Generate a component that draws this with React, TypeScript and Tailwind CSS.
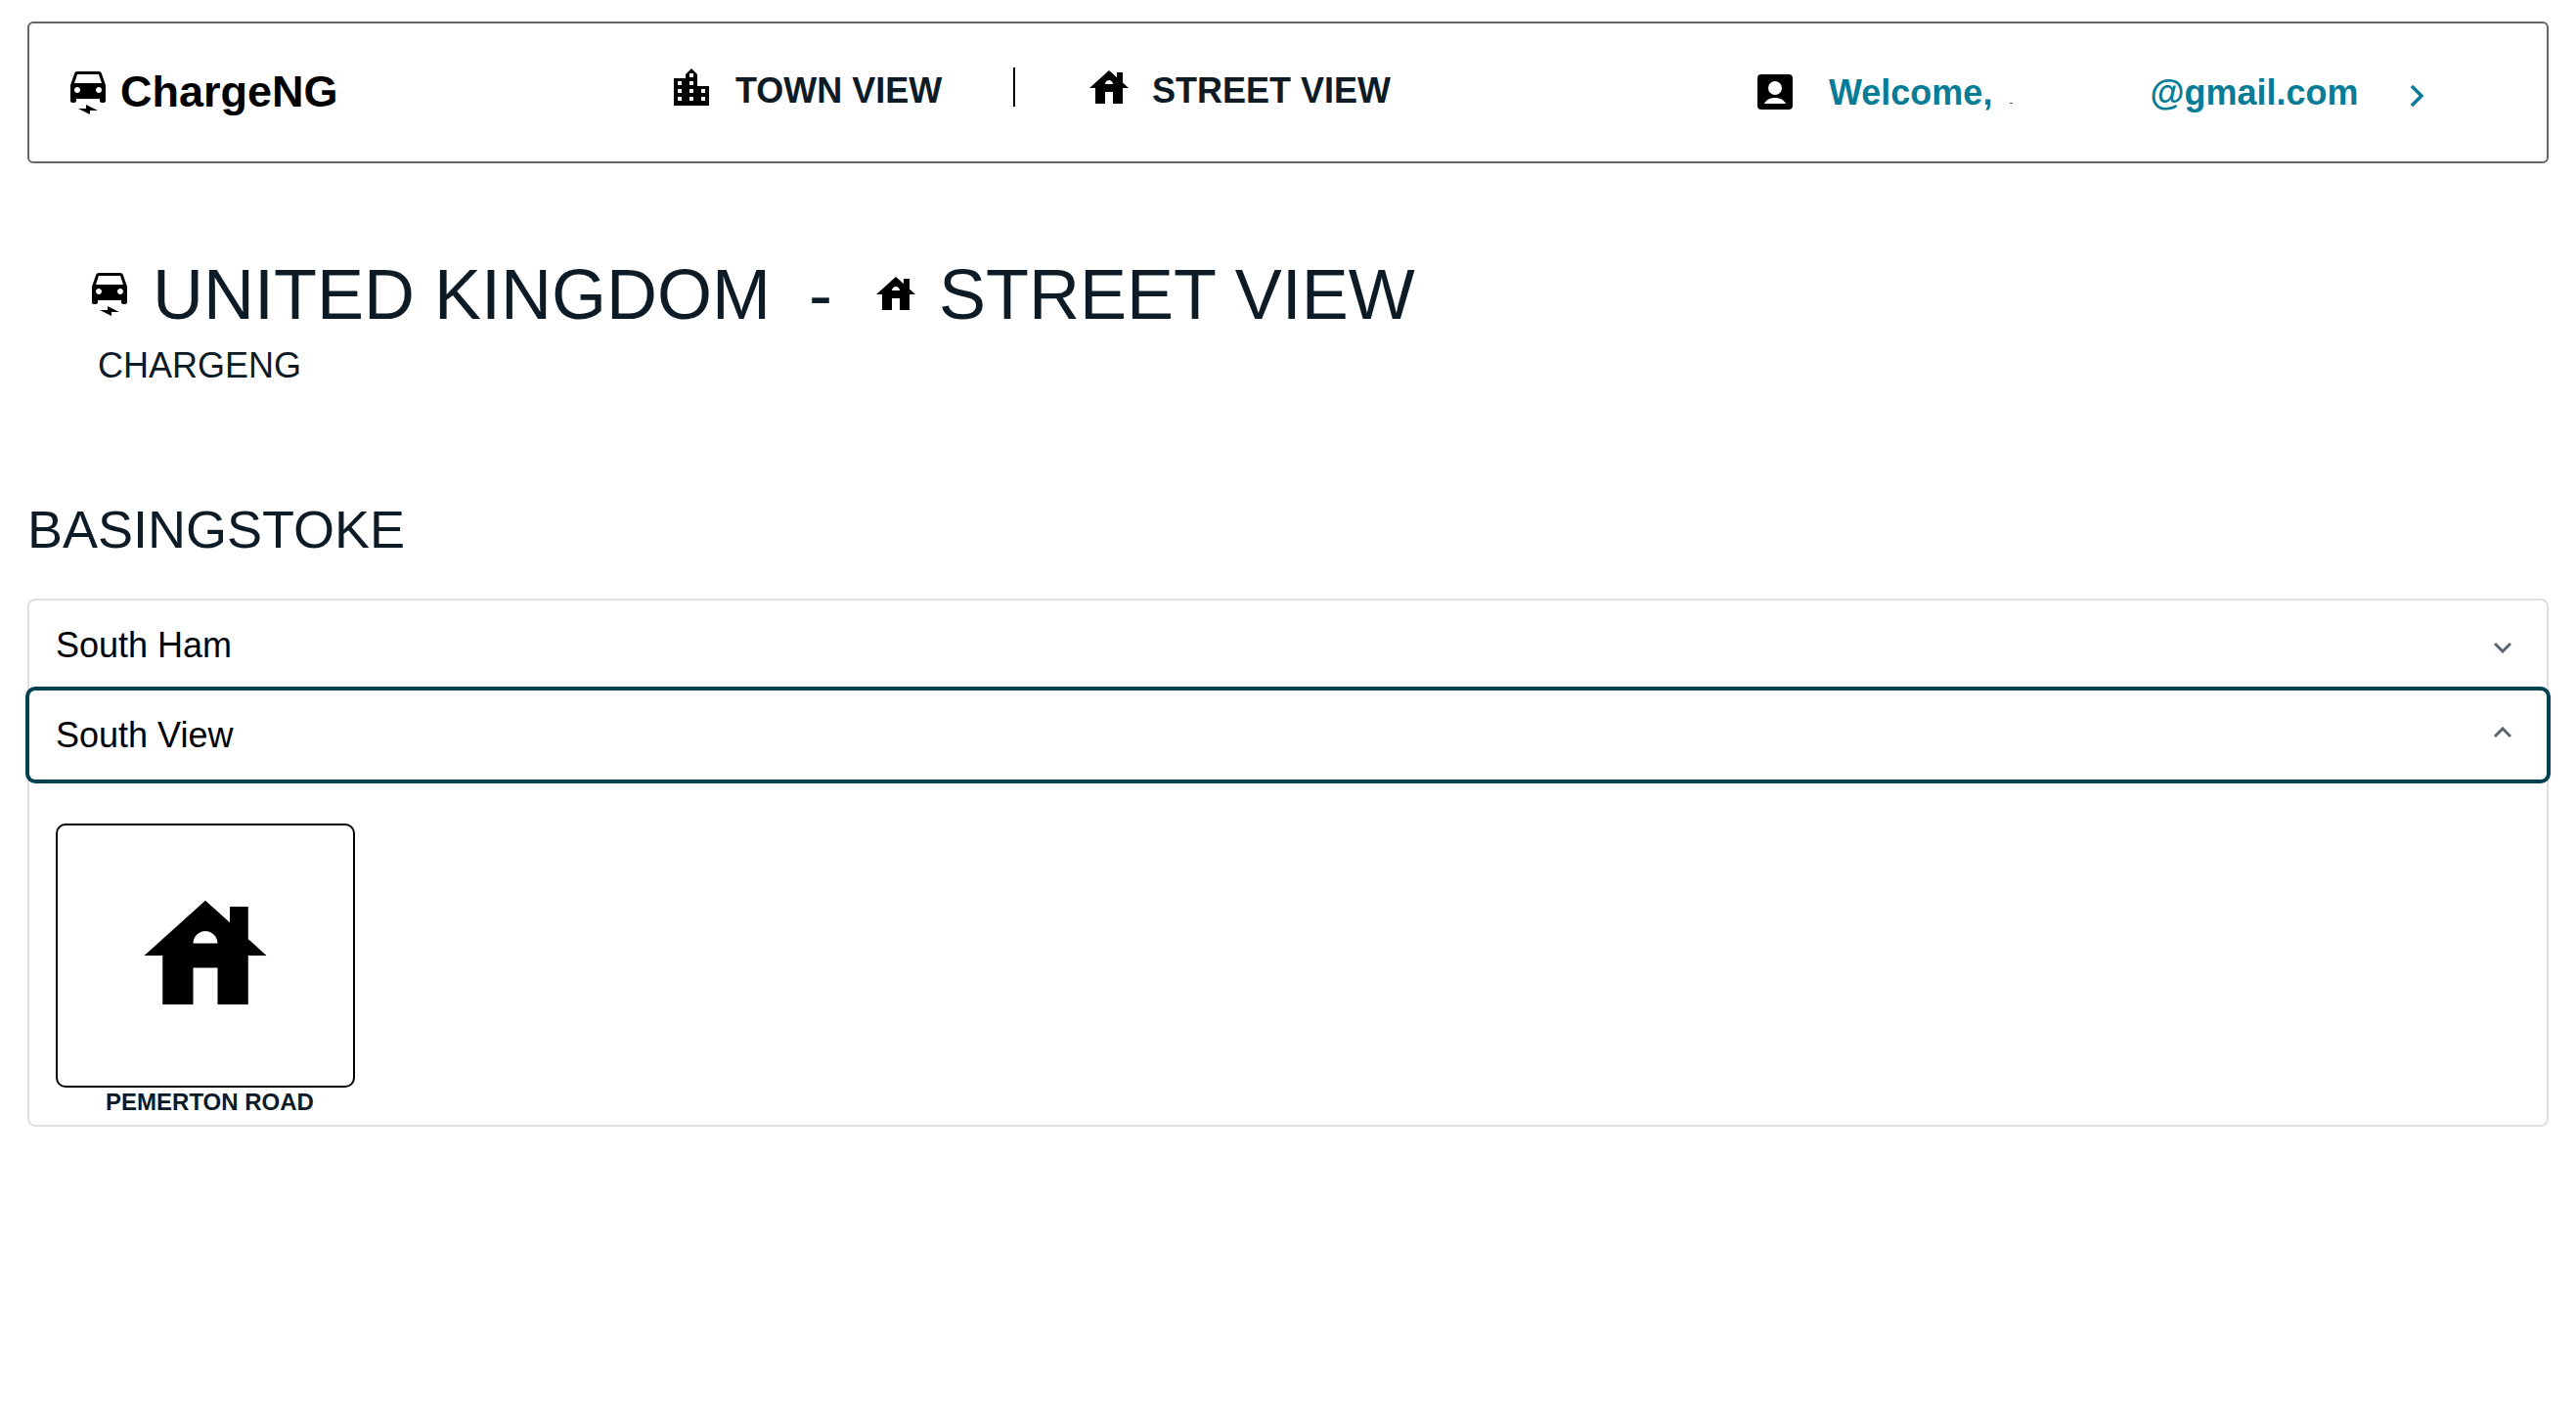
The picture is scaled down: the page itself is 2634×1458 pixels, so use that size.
import { MdElectricCar, MdHouse } from "react-icons/md";

function CityIcon() {
  return (
    <svg viewBox="0 0 36 38" className="mb-[12px] ml-[343px] h-[38px] w-[36px] shrink-0">
      <path fill="#000" d="M0 38V10h12V6l6-6 6 6v12h12v20z" />
      <g fill="#fff">
        <rect x="16" y="5" width="4" height="4" />
        <rect x="4" y="13" width="4" height="4" />
        <rect x="16" y="13" width="4" height="4" />
        <rect x="4" y="21" width="4" height="4" />
        <rect x="16" y="21" width="4" height="4" />
        <rect x="28" y="21" width="4" height="4" />
        <rect x="4" y="29" width="4" height="4" />
        <rect x="16" y="29" width="4" height="4" />
        <rect x="28" y="29" width="4" height="4" />
      </g>
    </svg>
  );
}

function ContactIcon() {
  return (
    <svg viewBox="0 0 36 36" className="mb-[2px] h-[36px] w-[36px] shrink-0">
      <rect width="36" height="36" rx="4" fill="#000" />
      <circle cx="18" cy="14" r="7" fill="#fff" />
      <path fill="#fff" d="M7 30c2-4 6-6 11-6s9 2 11 6z" />
    </svg>
  );
}

function Chevron({ up }: { up?: boolean }) {
  return (
    <svg viewBox="0 0 18 12" className={up ? "mb-[6px] h-[12px] w-[18px]" : "mt-[4px] h-[12px] w-[18px]"} fill="none" stroke="#5b6470" strokeWidth="3">
      <path d={up ? "M1 10l8-8 8 8" : "M1 2l8 8 8-8"} />
    </svg>
  );
}

export default function App() {
  return (
    <div className="min-h-[1458px] bg-white px-[28px] pt-[22px] font-['Liberation_Sans',Arial,sans-serif] text-[#0d1b26]">
      <nav className="flex h-[145px] items-center whitespace-nowrap rounded-[6px] border-2 border-[#666]">
        <MdElectricCar size={48} className="ml-[36px] shrink-0 text-black" />
        <span className="mb-[2px] ml-[9px] w-[223px] text-[45px] font-bold text-black">ChargeNG</span>
        <CityIcon />
        <span className="mb-[3px] ml-[27px] w-[216px] text-[36px] font-bold">TOWN VIEW</span>
        <span className="mb-[12px] ml-[68px] h-[40px] w-[2px] bg-black" />
        <MdHouse size={48} className="mb-[10px] ml-[72px] shrink-0 text-black" />
        <span className="mb-[3px] ml-[20px] w-[250px] text-[36px] font-bold">STREET VIEW</span>
        <span className="ml-[369px] flex items-center">
          <ContactIcon />
          <span className="ml-[37px] flex items-center text-[36px] font-bold text-[#087c96]">
            <span>Welcome,</span>
            <span className="ml-[18px] mt-[22px] h-[1px] w-[3px] bg-[#087c96]" />
            <span className="ml-[140px]">@gmail.com</span>
            <svg viewBox="0 0 15 24" className="ml-[52px] mt-[6px] h-[24px] w-[15px] shrink-0" fill="none" stroke="#087c96" strokeWidth="3.5">
              <path d="M2 2l10 10L2 22" />
            </svg>
          </span>
        </span>
      </nav>

      <div className="mt-[84px] flex items-center whitespace-nowrap pl-[60px] text-[72px] leading-[100px]">
        <MdElectricCar size={48} className="shrink-0 text-black" />
        <span className="ml-[20px]">UNITED KINGDOM</span>
        <span className="ml-[39px]">-</span>
        <MdHouse size={48} className="ml-[41px] shrink-0 text-black" />
        <span className="ml-[20px]">STREET VIEW</span>
      </div>
      <p className="mt-[3px] pl-[72px] text-[36px] leading-[40px]">CHARGENG</p>

      <h2 className="mt-[115px] text-[54px] leading-[64px]">BASINGSTOKE</h2>

      <div className="mt-[39px] rounded-[8px] border-2 border-[#dfdfdf]">
        <div className="flex h-[92px] items-center justify-between pl-[27px] pr-[36px] text-[36px] text-black">
          <span>South Ham</span>
          <Chevron />
        </div>
        <div className="relative z-10 flex h-[91px] items-center justify-between rounded-[6px] pl-[27px] pr-[36px] text-[36px] text-black ring-4 ring-[#004250]">
          <span>South View</span>
          <Chevron up />
        </div>
        <div className="pb-[8px] pl-[27px] pt-[45px]">
          <div className="flex h-[270px] w-[306px] items-center justify-center rounded-[10px] border-2 border-black">
            <MdHouse size={150} className="text-black" />
          </div>
          <p className="w-[306px] pl-[9px] text-center text-[24px] font-bold leading-[30px]">PEMERTON ROAD</p>
        </div>
      </div>
    </div>
  );
}
